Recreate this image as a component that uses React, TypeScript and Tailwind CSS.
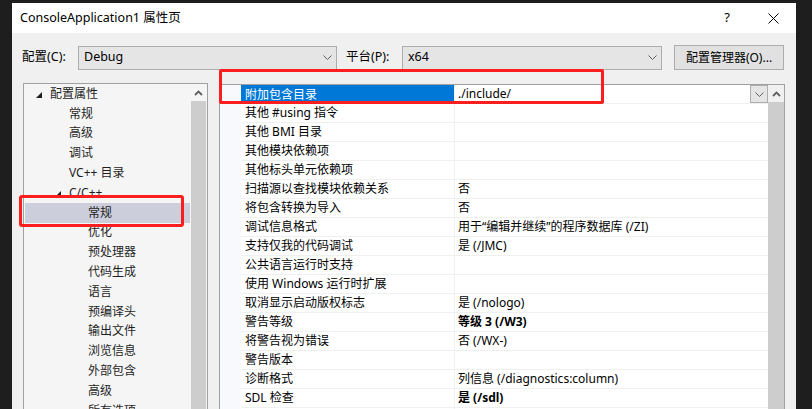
import React from "react";

const Chevron = ({ color = "#606060" }: { color?: string }) => (
  <svg width="9" height="5" viewBox="0 0 9 5">
    <polyline points="0.5,0.5 4.5,4.5 8.5,0.5" fill="none" stroke={color} strokeWidth="1" />
  </svg>
);

const UpArrow = () => (
  <svg width="9" height="6" viewBox="0 0 9 6">
    <polyline points="1,5 4.5,1.5 8,5" fill="none" stroke="#606060" strokeWidth="1.8" />
  </svg>
);

const Tri = () => (
  <svg width="6" height="6" viewBox="0 0 6 6" className="translate-y-[1px]">
    <polygon points="6,0 6,6 0,6" fill="#1e1e1e" />
  </svg>
);

type TreeItem = { text: string; level: number; expanded?: boolean; selected?: boolean };

const tree: TreeItem[] = [
  { text: "配置属性", level: 0, expanded: true },
  { text: "常规", level: 1 },
  { text: "高级", level: 1 },
  { text: "调试", level: 1 },
  { text: "VC++ 目录", level: 1 },
  { text: "C/C++", level: 1, expanded: true },
  { text: "常规", level: 2, selected: true },
  { text: "优化", level: 2 },
  { text: "预处理器", level: 2 },
  { text: "代码生成", level: 2 },
  { text: "语言", level: 2 },
  { text: "预编译头", level: 2 },
  { text: "输出文件", level: 2 },
  { text: "浏览信息", level: 2 },
  { text: "外部包含", level: 2 },
  { text: "高级", level: 2 },
  { text: "所有选项", level: 2 },
];

type Prop = { name: string; value: string; bold?: boolean; selected?: boolean };

const props: Prop[] = [
  { name: "附加包含目录", value: "./include/", selected: true },
  { name: "其他 #using 指令", value: "" },
  { name: "其他 BMI 目录", value: "" },
  { name: "其他模块依赖项", value: "" },
  { name: "其他标头单元依赖项", value: "" },
  { name: "扫描源以查找模块依赖关系", value: "否" },
  { name: "将包含转换为导入", value: "否" },
  { name: "调试信息格式", value: "用于“编辑并继续”的程序数据库 (/ZI)" },
  { name: "支持仅我的代码调试", value: "是 (/JMC)" },
  { name: "公共语言运行时支持", value: "" },
  { name: "使用 Windows 运行时扩展", value: "" },
  { name: "取消显示启动版权标志", value: "是 (/nologo)" },
  { name: "警告等级", value: "等级 3 (/W3)", bold: true },
  { name: "将警告视为错误", value: "否 (/WX-)" },
  { name: "警告版本", value: "" },
  { name: "诊断格式", value: "列信息 (/diagnostics:column)" },
  { name: "SDL 检查", value: "是 (/sdl)", bold: true },
  { name: "", value: "" },
];

function TreeRow({ item }: { item: TreeItem }) {
  let pad = "pl-[63px]";
  if (item.level === 0) pad = "pl-[11px]";
  else if (item.level === 1 && item.expanded) pad = "pl-[30px]";
  else if (item.level === 1) pad = "pl-[44px]";
  return (
    <div
      className={`h-[19.8px] flex items-center whitespace-nowrap ${pad} ${
        item.selected ? "bg-[#cccedb]" : ""
      }`}
    >
      {item.expanded && (
        <span className="w-[14px] flex items-center">
          <Tri />
        </span>
      )}
      <span className="text-[#1e1e1e]">{item.text}</span>
    </div>
  );
}

function PropRow({ p }: { p: Prop }) {
  return (
    <div className="h-[19px] flex shrink-0">
      <div
        className={`w-[214px] shrink-0 flex items-center pl-[4px] whitespace-nowrap border-r border-[#f0f0f0] ${
          p.selected ? "bg-[#0078d7] text-white" : "border-b"
        }`}
      >
        {p.name}
      </div>
      <div
        className={`flex-1 flex items-center pl-[3px] whitespace-nowrap border-b border-[#f0f0f0] ${
          p.bold ? "font-bold" : ""
        }`}
      >
        <span className="flex-1">{p.value}</span>
        {p.selected && (
          <span className="w-[18px] h-[18px] border border-[#adadad] bg-[#e5e5e5] flex items-center justify-center">
            <Chevron />
          </span>
        )}
      </div>
    </div>
  );
}

export default function App() {
  return (
    <div className="relative w-[812px] h-[409px] overflow-hidden bg-[#1e1e1e] pt-[3px] pl-[12px] font-['Noto_Sans','Noto_Sans_CJK_SC',sans-serif] text-[12px] text-black">
      <div className="w-[784px] h-[406px] flex flex-col bg-[#f0f0f0]">
        {/* Title bar */}
        <div className="h-[30px] shrink-0 bg-white flex items-center pl-[8px]">
          <span className="text-[12.5px]">ConsoleApplication1 属性页</span>
          <div className="ml-auto flex h-full">
            <div className="w-[46px] flex items-center justify-center text-[13px]">?</div>
            <div className="w-[46px] flex items-center justify-center">
              <svg width="11" height="11" viewBox="0 0 11 11">
                <line x1="0.5" y1="0.5" x2="10.5" y2="10.5" stroke="#000" strokeWidth="1" />
                <line x1="10.5" y1="0.5" x2="0.5" y2="10.5" stroke="#000" strokeWidth="1" />
              </svg>
            </div>
          </div>
        </div>

        {/* Config row */}
        <div className="mt-[12px] h-[25px] shrink-0 flex items-center pl-[10px]">
          <span className="w-[56px] shrink-0 whitespace-nowrap text-[12.5px]">配置(C):</span>
          <div className="w-[259px] h-[24px] border border-[#adadad] bg-[#e5e5e5] flex items-center pl-[5px] pr-[4px]">
            <span className="flex-1 text-[12.5px]">Debug</span>
            <Chevron />
          </div>
          <span className="w-[65px] shrink-0 pl-[9px] whitespace-nowrap text-[12.5px]">平台(P):</span>
          <div className="w-[260px] h-[24px] border border-[#adadad] bg-[#e5e5e5] flex items-center pl-[5px] pr-[4px]">
            <span className="flex-1 text-[12.5px]">x64</span>
            <Chevron />
          </div>
          <div className="ml-[12px] w-[110px] h-[25px] border border-[#adadad] bg-[#e1e1e1] flex items-center justify-center whitespace-nowrap">
            配置管理器(O)...
          </div>
        </div>

        {/* Panes */}
        <div className="mt-[13px] flex flex-1 min-h-0 pl-[11px]">
          {/* Tree */}
          <div className="w-[185px] shrink-0 border border-[#a0a0a0] border-b-0 bg-[#f5f5f5] flex overflow-hidden">
            <div className="flex-1 min-w-0 pl-[1px]">
              {tree.map((t, i) => (
                <TreeRow key={i} item={t} />
              ))}
            </div>
            <div className="w-[17px] shrink-0 flex flex-col">
              <div className="h-[17px] flex items-center justify-center">
                <UpArrow />
              </div>
              <div className="flex-1 bg-[#cdcdcd] ml-[1px] mr-[1px]" />
            </div>
          </div>

          {/* Property grid */}
          <div className="ml-[11px] mt-[1px] w-[566px] shrink-0 border border-[#a0a0a0] border-b-0 bg-white flex overflow-hidden">
            <div className="w-[21px] shrink-0 bg-[#f7f9fc]" />
            <div className="flex-1 flex flex-col min-w-0">
              {props.map((p, i) => (
                <PropRow key={i} p={p} />
              ))}
            </div>
            <div className="w-[16px] shrink-0 flex flex-col bg-[#f0f0f0]">
              <div className="h-[17px] flex items-center justify-center">
                <UpArrow />
              </div>
              <div className="flex-1 bg-[#cdcdcd]" />
            </div>
          </div>
        </div>
      </div>

      {/* Red annotation boxes */}
      <div className="absolute left-[219px] top-[69px] w-[385px] h-[35px] border-[3px] border-[#fa1e1e] rounded-[2px]" />
      <div className="absolute left-[19px] top-[195px] w-[165px] h-[32px] border-[3px] border-[#fa1e1e] rounded-[3px]" />
    </div>
  );
}
